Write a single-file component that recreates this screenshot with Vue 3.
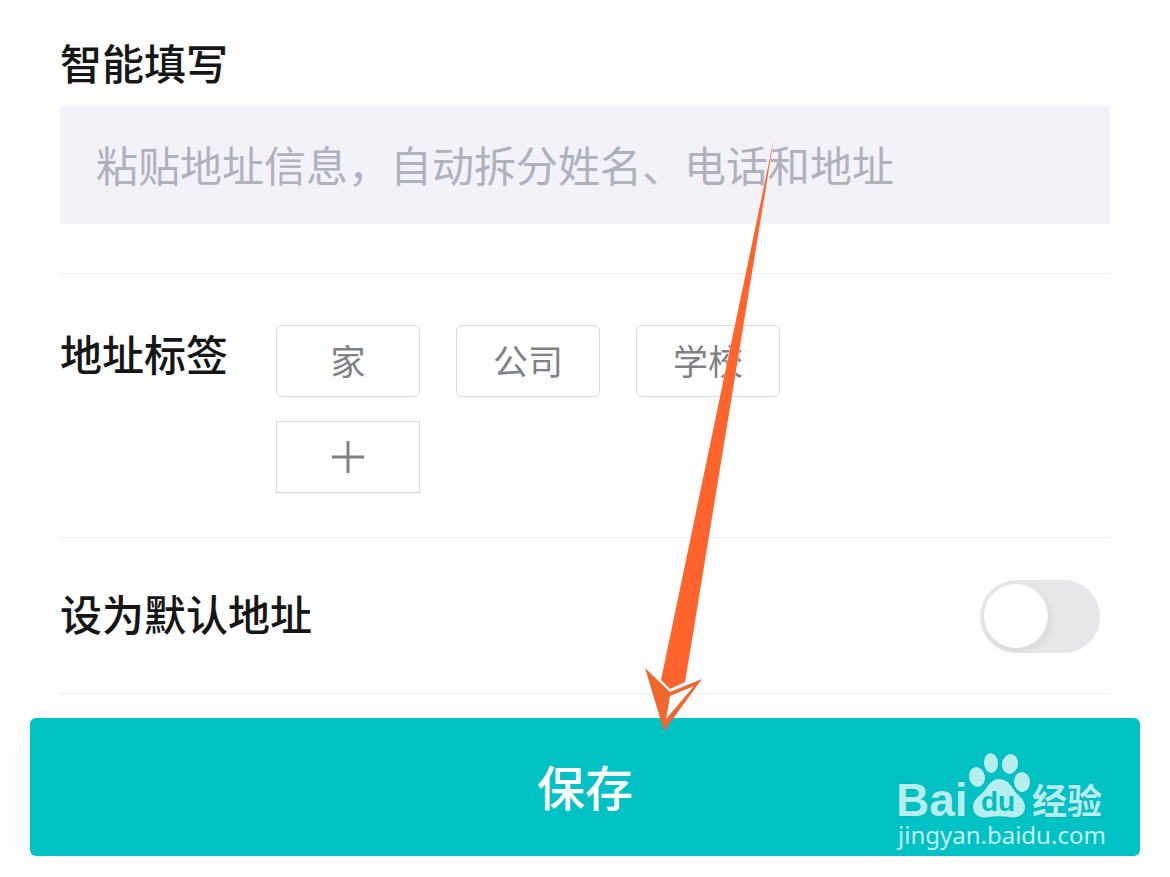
<script setup>
import { ref } from 'vue'

const pasted = ref('')
const tags = ['家', '公司', '学校']
const selected = ref('')
const isDefault = ref(false)
</script>

<template>
  <form class="page" @submit.prevent>
    <section class="smart">
      <label class="title" for="paste">智能填写</label>
      <input id="paste" v-model="pasted" class="paste" type="text" placeholder="粘贴地址信息，自动拆分姓名、电话和地址" />
    </section>

    <section class="labels">
      <h2 class="title">地址标签</h2>
      <div class="tags">
        <button v-for="tag in tags" :key="tag" class="tag" type="button" @click="selected = tag">{{ tag }}</button>
        <button class="tag add" type="button" aria-label="添加标签">
          <svg width="32" height="32" viewBox="0 0 32 32" aria-hidden="true">
            <path d="M0 16H32M16 0V32" stroke="#808087" stroke-width="3" />
          </svg>
        </button>
      </div>
    </section>

    <section class="default">
      <label class="title" for="default">设为默认地址</label>
      <input id="default" v-model="isDefault" class="switch" type="checkbox" role="switch" />
    </section>

    <div class="footer">
      <button class="save" type="submit">保存</button>
      <svg class="watermark" width="216" height="104" viewBox="0 0 216 104" role="img" aria-label="Baidu 经验">
        <g fill="#b5eeee" stroke="#07aeb1" stroke-width="1" paint-order="stroke">
          <text class="brand" x="6" y="66">Bai</text>
          <ellipse cx="87" cy="27" rx="8" ry="10" transform="rotate(-12 87 27)" />
          <ellipse cx="101" cy="13" rx="7" ry="10" transform="rotate(-4 101 13)" />
          <ellipse cx="120" cy="14" rx="8" ry="10" transform="rotate(12 120 14)" />
          <ellipse cx="132" cy="32" rx="8" ry="10" transform="rotate(-4 132 32)" />
          <path d="M109 29C101 29 98 36 94 41C89 47 83 49 83 57C83 66 92 69 99 67C106 66 112 66 119 67C127 69 135 65 135 57C135 49 128 46 124 40C120 34 117 29 109 29Z" />
          <text class="jingyan" x="142" y="64">经验</text>
        </g>
        <text class="du" x="91" y="61" fill="#00bfc1">du</text>
        <text class="site" x="8" y="94" fill="#c5f3f3">jingyan.baidu.com</text>
      </svg>
    </div>

    <svg class="arrow" width="80" height="610" viewBox="635 130 80 610" aria-hidden="true">
      <path d="M774 138L661 680L670 689L685 682L692 640Z" fill="#ff642d" stroke="#fff" stroke-opacity=".6" stroke-width="1" paint-order="stroke" />
      <path d="M645 668L670 692L702 679L664 731Z" fill="#f1652f" />
      <path d="M670 696L694 686L666 719Z" fill="#fff" />
    </svg>
  </form>
</template>

<style>
body {
  margin: 0;
  background: #fefefe;
}
</style>

<style scoped>
.page {
  position: relative;
  padding: 38px 30px 20px;
  color: #161616;
  font-family: "Noto Sans CJK SC", sans-serif;
}

section {
  margin: 0 30px;
  border-bottom: 1px solid #f0f0f1;
}

.title {
  display: block;
  margin: 0;
  font-size: 42px;
  font-weight: 500;
  line-height: 48px;
}

.smart {
  padding-bottom: 49px;
}

.paste {
  box-sizing: border-box;
  display: block;
  width: 100%;
  height: 118px;
  margin-top: 20px;
  padding: 0 36px 4px;
  border: 0;
  border-radius: 0;
  background: #f3f2f8;
  color: #161616;
  font-family: inherit;
  font-size: 42px;
}

.paste::placeholder {
  color: #b1b0bd;
  opacity: 1;
}

.labels {
  display: flex;
  padding: 51px 0 44px;
}

.labels .title {
  flex: 0 0 216px;
  padding-top: 4px;
}

.tags {
  display: grid;
  grid-template-columns: repeat(3, 144px);
  gap: 24px 36px;
}

.tag {
  display: flex;
  align-items: center;
  justify-content: center;
  height: 72px;
  padding: 0 0 4px;
  border: 1px solid #d9d9da;
  border-radius: 6px;
  background: #fefefe;
  color: #808087;
  font-family: inherit;
  font-size: 35px;
}

.add {
  padding: 0;
  border-radius: 0;
}

.default {
  display: flex;
  justify-content: space-between;
  padding: 42px 10px 40px 0;
}

.default .title {
  padding-top: 9px;
}

.switch {
  appearance: none;
  box-sizing: border-box;
  width: 120px;
  height: 73px;
  margin: 0;
  padding: 4px;
  border-radius: 37px;
  background: #e7e7e9;
}

.switch::before {
  content: "";
  display: block;
  width: 64px;
  height: 64px;
  border-radius: 50%;
  background: #fff;
  box-shadow: 2px 3px 8px rgba(0, 0, 0, 0.08);
}

.switch:checked {
  background: #00c2c4;
}

.switch:checked::before {
  margin-left: auto;
}

.footer {
  position: relative;
  margin-top: 24px;
}

.save {
  display: block;
  width: 100%;
  height: 138px;
  padding: 0 0 4px;
  border: 0;
  border-radius: 6px;
  background: #00c2c4;
  color: #fff;
  font-family: inherit;
  font-size: 48px;
  font-weight: 500;
}

.watermark {
  position: absolute;
  right: 34px;
  bottom: 2px;
  pointer-events: none;
}

.brand {
  font: 700 46px "Liberation Sans", sans-serif;
}

.jingyan {
  font: 700 35px "Noto Sans CJK SC", sans-serif;
}

.du {
  font: 700 28px "Liberation Sans", sans-serif;
}

.site {
  font: 400 24px "Noto Sans", sans-serif;
}

.arrow {
  position: absolute;
  top: 130px;
  left: 635px;
  overflow: visible;
  pointer-events: none;
}
</style>
